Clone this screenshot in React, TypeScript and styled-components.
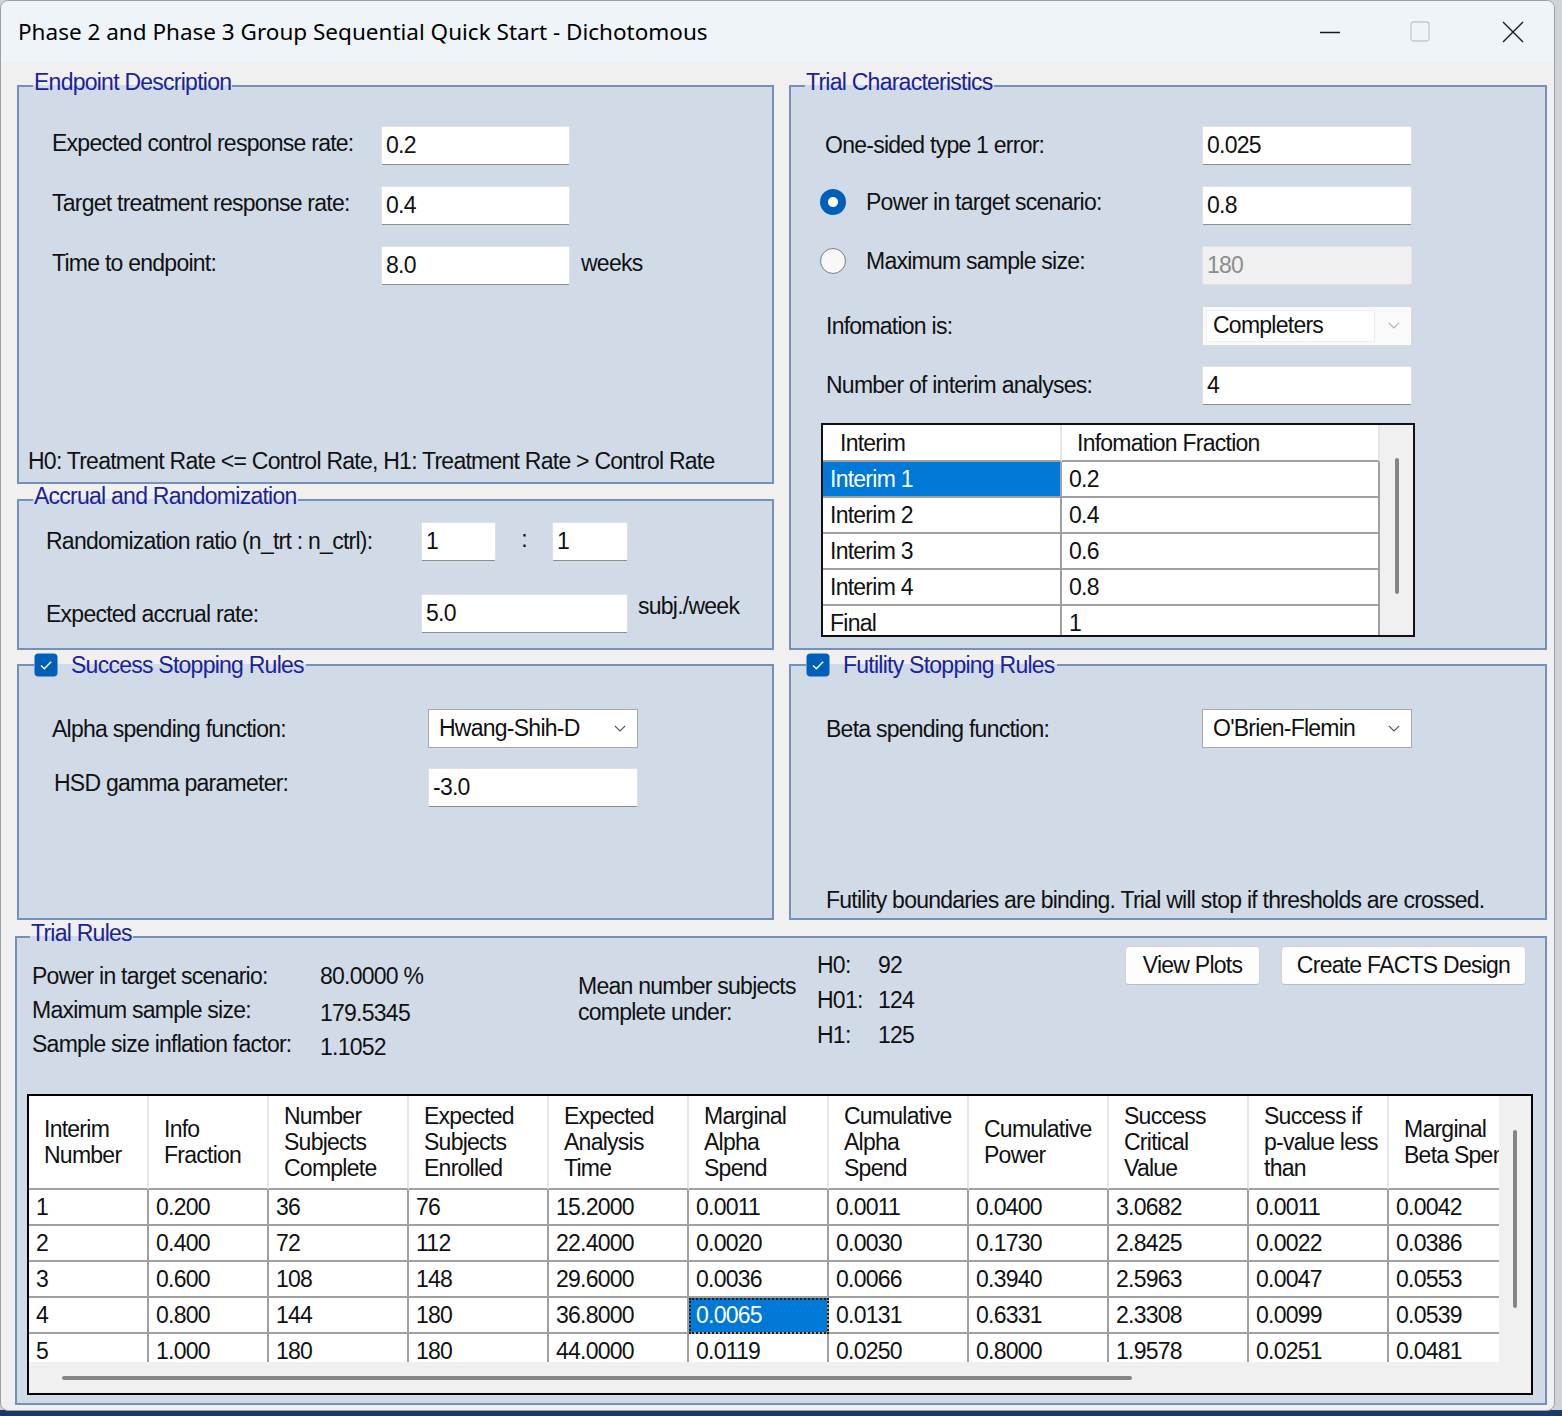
import React from 'react'
import styled, { createGlobalStyle } from 'styled-components'

const UI = `"Liberation Sans", Arial, sans-serif`

const GlobalStyle = createGlobalStyle`
  html, body { margin: 0; padding: 0; }
  body {
    min-height: 1416px;
    background: linear-gradient(#cfd3d8 0, #cfd3d8 1410px, #1d3a66 1410px);
    font-family: ${UI};
    font-size: 23px;
    letter-spacing: -0.75px;
    color: #111;
  }
`

type Row = string[]

const dataColumns = [
  'Interim\nNumber',
  'Info\nFraction',
  'Number\nSubjects\nComplete',
  'Expected\nSubjects\nEnrolled',
  'Expected\nAnalysis\nTime',
  'Marginal\nAlpha\nSpend',
  'Cumulative\nAlpha\nSpend',
  'Cumulative\nPower',
  'Success\nCritical\nValue',
  'Success if\np-value less\nthan',
  'Marginal\nBeta Spend',
]

const dataRows: Row[] = [
  ['1', '0.200', '36', '76', '15.2000', '0.0011', '0.0011', '0.0400', '3.0682', '0.0011', '0.0042'],
  ['2', '0.400', '72', '112', '22.4000', '0.0020', '0.0030', '0.1730', '2.8425', '0.0022', '0.0386'],
  ['3', '0.600', '108', '148', '29.6000', '0.0036', '0.0066', '0.3940', '2.5963', '0.0047', '0.0553'],
  ['4', '0.800', '144', '180', '36.8000', '0.0065', '0.0131', '0.6331', '2.3308', '0.0099', '0.0539'],
  ['5', '1.000', '180', '180', '44.0000', '0.0119', '0.0250', '0.8000', '1.9578', '0.0251', '0.0481'],
]

const interimRows: Row[] = [
  ['Interim 1', '0.2'],
  ['Interim 2', '0.4'],
  ['Interim 3', '0.6'],
  ['Interim 4', '0.8'],
  ['Final', '1'],
]

function Chevron({ color = '#555' }: { color?: string }) {
  return (
    <svg width="12" height="7" viewBox="0 0 12 7">
      <polyline points="0.8,0.8 6,6 11.2,0.8" fill="none" stroke={color} strokeWidth="1.2" />
    </svg>
  )
}

function CheckMark() {
  return (
    <svg width="24" height="24" viewBox="0 0 24 24">
      <rect x="0.5" y="0.5" width="23" height="23" rx="4" fill="#005fb8" />
      <path d="M7 12.4l3.3 3.3L17.2 8.8" fill="none" stroke="#fff" strokeWidth="1.4" />
    </svg>
  )
}

type GroupBoxProps = {
  title: React.ReactNode
  height: number
  check?: boolean
  offset?: number
  shift?: boolean
  children: React.ReactNode
}

// legend is 32px tall for plain titles, 30px when a checkbox sits in it
function GroupBox({ title, height, check, offset, shift, children }: GroupBoxProps) {
  const legendH = check ? 30 : 32
  const Box = shift ? RulesGroup : Group
  return (
    <Box $h={height}>
      <Legend $check={check} $offset={offset}>
        {check && <CheckMark />}
        {title}
      </Legend>
      <Inner $h={height - legendH - 2}>{children}</Inner>
    </Box>
  )
}

export default function App() {
  return (
    <>
      <GlobalStyle />
      <Window>
        <TitleBar>
          <Title>Phase 2 and Phase 3 Group Sequential Quick Start - Dichotomous</Title>
          <Caption>
            <CaptionButton $w={76}>
              <svg width="20" height="20" viewBox="0 0 20 20">
                <line x1="0" y1="10.5" x2="20" y2="10.5" stroke="#1a1a1a" strokeWidth="1.3" />
              </svg>
            </CaptionButton>
            <CaptionButton $w={104}>
              <svg width="20" height="21" viewBox="0 0 20 21">
                <rect x="1" y="1" width="18" height="19" rx="2.5" fill="none" stroke="#c6c6c6" strokeWidth="1.3" />
              </svg>
            </CaptionButton>
            <CaptionButton $w={82}>
              <svg width="22" height="22" viewBox="0 0 22 22">
                <path d="M1 1L21 21M21 1L1 21" stroke="#1a1a1a" strokeWidth="1.4" />
              </svg>
            </CaptionButton>
          </Caption>
        </TitleBar>

        <Body>
          <Columns>
            <Stack>
              <GroupBox title="Endpoint Description" height={414}>
                <Form $cols="329px 189px auto" $pt={24} $pl={33} $gap={21}>
                  <Label $lift={6}>Expected control response rate:</Label>
                  <TextBox>0.2</TextBox>
                  <span />
                  <Label $lift={6}>Target treatment response rate:</Label>
                  <TextBox>0.4</TextBox>
                  <span />
                  <Label $lift={6}>Time to endpoint:</Label>
                  <TextBox>8.0</TextBox>
                  <Unit>weeks</Unit>
                </Form>
                <Note $pl={9} $pb={9}>
                  H0: Treatment Rate &lt;= Control Rate, H1: Treatment Rate &gt; Control Rate
                </Note>
              </GroupBox>

              <GroupBox title="Accrual and Randomization" height={166}>
                <Form $cols="375px 75px 56px 76px auto" $pt={6} $pl={27} $gap={33}>
                  <Label $lift={2}>Randomization ratio (n_trt : n_ctrl):</Label>
                  <TextBox>1</TextBox>
                  <Colon>:</Colon>
                  <TextBox>1</TextBox>
                  <span />
                  <Label>Expected accrual rate:</Label>
                  <TextBox $span={3}>5.0</TextBox>
                  <Unit $top>subj./week</Unit>
                </Form>
              </GroupBox>
            </Stack>

            <GroupBox title="Trial Characteristics" height={580}>
              <Form $cols="382px 210px" $pt={24} $pl={29} $gap={21}>
                <Label $indent={5} $lift={2}>One-sided type 1 error:</Label>
                <TextBox>0.025</TextBox>
                <RadioLabel $lift={8}>
                  <Radio $checked />
                  Power in target scenario:
                </RadioLabel>
                <TextBox>0.8</TextBox>
                <RadioLabel $lift={10}>
                  <Radio />
                  Maximum sample size:
                </RadioLabel>
                <TextBox $disabled>180</TextBox>
                <Label $indent={6}>Infomation is:</Label>
                <FlatCombo>
                  <FlatField>Completers</FlatField>
                  <Chevron color="#b0b0b0" />
                </FlatCombo>
                <Label $indent={6} $lift={2}>Number of interim analyses:</Label>
                <TextBox>4</TextBox>
              </Form>

              <InfoGrid>
                <Viewport>
                  <Table $cols="239px 318px">
                    <HeadCell $h={37} $pad={17}>Interim</HeadCell>
                    <HeadCell $h={37} $pad={15}>Infomation Fraction</HeadCell>
                    {interimRows.map((r, i) =>
                      r.map((v, j) => (
                        <Cell key={`${i}-${j}`} $selected={i === 0 && j === 0}>
                          {v}
                        </Cell>
                      ))
                    )}
                  </Table>
                </Viewport>
                <VScroll $top={33}>
                  <VThumb $h={136} />
                </VScroll>
              </InfoGrid>
            </GroupBox>
          </Columns>

          <Columns>
            <GroupBox title="Success Stopping Rules" height={270} check>
              <Form $cols="376px 210px" $pt={29} $pl={33} $gap={20}>
                <Label>Alpha spending function:</Label>
                <Combo>
                  Hwang-Shih-D
                  <Chevron />
                </Combo>
                <Label $indent={2} $lift={10}>HSD gamma parameter:</Label>
                <TextBox>-3.0</TextBox>
              </Form>
            </GroupBox>

            <GroupBox title="Futility Stopping Rules" height={270} check>
              <Form $cols="376px 210px" $pt={29} $pl={35} $gap={20}>
                <Label>Beta spending function:</Label>
                <Combo>
                  O'Brien-Flemin
                  <Chevron />
                </Combo>
              </Form>
              <Note $pl={35} $pb={6}>
                Futility boundaries are binding. Trial will stop if thresholds are crossed.
              </Note>
            </GroupBox>
          </Columns>

          <GroupBox title="Trial Rules" height={484} offset={13} shift>
            <Summary>
              <StatsGrid>
                <Label>Power in target scenario:</Label>
                <Value>80.0000 %</Value>
                <Label>Maximum sample size:</Label>
                <Value $drop>179.5345</Value>
                <Label>Sample size inflation factor:</Label>
                <Value $drop>1.1052</Value>
              </StatsGrid>
              <MeanText>
                Mean number subjects
                <br />
                complete under:
              </MeanText>
              <HypGrid>
                <Label>H0:</Label>
                <Value>92</Value>
                <Label>H01:</Label>
                <Value>124</Value>
                <Label>H1:</Label>
                <Value>125</Value>
              </HypGrid>
              <Buttons>
                <Button $w={135}>View Plots</Button>
                <Button $w={245}>Create FACTS Design</Button>
              </Buttons>
            </Summary>

            <GridFrame>
              <Viewport>
                <Table $cols="120px 120px repeat(9, 140px)">
                  {dataColumns.map(c => (
                    <HeadCell key={c} $h={94} $pad={15}>
                      {c}
                    </HeadCell>
                  ))}
                  {dataRows.map((r, i) =>
                    r.map((v, j) => (
                      <Cell key={`${i}-${j}`} $selected={i === 3 && j === 5} $focus={i === 3 && j === 5}>
                        {v}
                      </Cell>
                    ))
                  )}
                </Table>
              </Viewport>
              <VScroll $top={34}>
                <VThumb $h={178} />
              </VScroll>
              <HScroll>
                <HThumb $w={1070} />
              </HScroll>
              <Corner />
            </GridFrame>
          </GroupBox>
        </Body>
      </Window>
    </>
  )
}

const Window = styled.div`
  width: 1555px;
  height: 1411px;
  box-sizing: border-box;
  border: 1px solid #9aa0a6;
  border-radius: 8px;
  background: #f0f0f0;
  overflow: hidden;
  display: flex;
  flex-direction: column;
`

const TitleBar = styled.div`
  flex: none;
  height: 61px;
  display: flex;
  align-items: center;
  padding-left: 17px;
  background: #eff4f9;
`

const Title = styled.div`
  flex: 1;
  font-family: "Noto Sans", "Open Sans", sans-serif;
  font-size: 22.5px;
  letter-spacing: 0;
  color: #000;
`

const Caption = styled.div`
  display: flex;
  height: 100%;
`

const CaptionButton = styled.div<{ $w: number }>`
  width: ${p => p.$w}px;
  display: flex;
  align-items: center;
  justify-content: center;
`

const Body = styled.div`
  flex: 1;
  display: flex;
  flex-direction: column;
  padding: 8px 7px 0 16px;
`

const Columns = styled.div`
  display: grid;
  grid-template-columns: 757px 758px;
  column-gap: 15px;
`

const Stack = styled.div`
  display: flex;
  flex-direction: column;
`

const Group = styled.fieldset<{ $h: number }>`
  margin: 0;
  padding: 0;
  min-width: 0;
  box-sizing: border-box;
  height: ${p => p.$h}px;
  border: 2px solid #7591b7;
  background: #d1dbe8;
`

const RulesGroup = styled(Group)`
  margin: 1px 0 0 -2px;
`

const Legend = styled.legend<{ $check?: boolean; $offset?: number }>`
  margin-left: ${p => p.$offset ?? (p.$check ? 15 : 14)}px;
  padding: ${p => (p.$check ? '3px 2px 3px 0' : '0 1px 8px')};
  display: flex;
  align-items: center;
  gap: 13px;
  font-size: 23px;
  line-height: 24px;
  color: #1a239a;
`

const Inner = styled.div<{ $h: number }>`
  height: ${p => p.$h}px;
  display: flex;
  flex-direction: column;
`

// $lift raises a label above the centre line of its field, as the dialog does
const Label = styled.div<{ $indent?: number; $lift?: number }>`
  padding-left: ${p => p.$indent ?? 0}px;
  padding-bottom: ${p => p.$lift ?? 0}px;
  line-height: 24px;
  white-space: nowrap;
  color: #111;
`

const RadioLabel = styled(Label)`
  display: flex;
  align-items: center;
  gap: 20px;
`

const Form = styled.div<{ $cols: string; $pt: number; $pl: number; $gap: number }>`
  display: grid;
  grid-template-columns: ${p => p.$cols};
  grid-auto-rows: 39px;
  row-gap: ${p => p.$gap}px;
  align-items: center;
  padding: ${p => p.$pt}px 0 0 ${p => p.$pl}px;
`

const Radio = styled.span<{ $checked?: boolean }>`
  flex: none;
  width: 26px;
  height: 26px;
  box-sizing: border-box;
  border-radius: 50%;
  background: ${p =>
    p.$checked ? 'radial-gradient(circle, #fff 0 4.5px, #005fb8 5.5px)' : '#f8f8f8'};
  border: ${p => (p.$checked ? 'none' : '1.5px solid #7d7d7d')};
`

const TextBox = styled.div<{ $span?: number; $disabled?: boolean }>`
  grid-column: span ${p => p.$span ?? 1};
  height: 39px;
  box-sizing: border-box;
  display: flex;
  align-items: center;
  padding-left: 4px;
  background: ${p => (p.$disabled ? '#f0f0f0' : '#fff')};
  color: ${p => (p.$disabled ? '#8d8d8d' : '#111')};
  border: 1px solid ${p => (p.$disabled ? '#e2e2e2' : '#e0e0e0')};
  border-bottom-color: ${p => (p.$disabled ? '#e2e2e2' : '#8c8c8c')};
  border-radius: 2px;
`

const Combo = styled.div`
  height: 39px;
  box-sizing: border-box;
  display: flex;
  align-items: center;
  justify-content: space-between;
  padding: 0 11px 0 10px;
  background: #fff;
  border: 1px solid #a9a9a9;
`

const FlatCombo = styled.div`
  height: 40px;
  box-sizing: border-box;
  display: flex;
  align-items: center;
  gap: 13px;
  padding: 3px 11px 3px 3px;
  background: #fafafa;
  border: 1px solid #d9d9d9;
`

const FlatField = styled.div`
  width: 170px;
  height: 100%;
  box-sizing: border-box;
  display: flex;
  align-items: center;
  padding-left: 6px;
  background: #fff;
  border: 1px solid #eeeeee;
`

const Unit = styled.div<{ $top?: boolean }>`
  align-self: ${p => (p.$top ? 'start' : 'center')};
  padding: 0 0 ${p => (p.$top ? 0 : 6)}px ${p => (p.$top ? 10 : 11)}px;
  line-height: 24px;
  white-space: nowrap;
`

const Colon = styled.div`
  text-align: center;
  padding-bottom: 4px;
`

const Note = styled.div<{ $pl: number; $pb: number }>`
  margin-top: auto;
  padding: 0 0 ${p => p.$pb}px ${p => p.$pl}px;
  line-height: 24px;
  white-space: nowrap;
`

const InfoGrid = styled.div`
  margin: 18px 0 0 30px;
  width: 594px;
  height: 214px;
  box-sizing: border-box;
  border: 2px solid #111;
  background: #f0f0f0;
  display: grid;
  grid-template-columns: 1fr 33px;
`

const Viewport = styled.div`
  overflow: hidden;
  background: #fff;
`

const Table = styled.div<{ $cols: string }>`
  display: grid;
  grid-template-columns: ${p => p.$cols};
  width: max-content;
`

const HeadCell = styled.div<{ $h: number; $pad: number }>`
  height: ${p => p.$h}px;
  box-sizing: border-box;
  display: flex;
  align-items: center;
  padding-left: ${p => p.$pad}px;
  background: #fff;
  border-right: 2px solid #e6e6e6;
  border-bottom: 2px solid #a0a0a0;
  line-height: 26px;
  white-space: pre;
  overflow: hidden;
`

const Cell = styled.div<{ $selected?: boolean; $focus?: boolean }>`
  height: 36px;
  box-sizing: border-box;
  display: flex;
  align-items: center;
  padding-left: 7px;
  border-right: 2px solid #a0a0a0;
  border-bottom: 2px solid #a0a0a0;
  background: ${p => (p.$selected ? '#0078d7' : '#fff')};
  color: ${p => (p.$selected ? '#fff' : '#111')};
  outline: ${p => (p.$focus ? '2px dotted #2b1d00' : 'none')};
  outline-offset: -2px;
  white-space: nowrap;
  overflow: hidden;
`

const VScroll = styled.div<{ $top: number }>`
  display: flex;
  justify-content: center;
  padding-top: ${p => p.$top}px;
  background: #f0f0f0;
`

const VThumb = styled.div<{ $h: number }>`
  width: 4px;
  height: ${p => p.$h}px;
  border-radius: 2px;
  background: #858585;
`

const HScroll = styled.div`
  display: flex;
  align-items: center;
  padding-left: 33px;
  background: #f0f0f0;
`

const HThumb = styled.div<{ $w: number }>`
  width: ${p => p.$w}px;
  height: 4px;
  border-radius: 2px;
  background: #858585;
`

const Corner = styled.div`
  background: #f0f0f0;
`

const Summary = styled.div`
  height: 148px;
  flex: none;
  margin-top: -7px;
  display: flex;
  align-items: flex-start;
  padding: 0 19px 0 15px;
`

const StatsGrid = styled.div`
  display: grid;
  grid-template-columns: 288px 258px;
  grid-auto-rows: 34px;
  align-items: center;
  margin-top: 13px;
`

const Value = styled.div<{ $drop?: boolean }>`
  padding-top: ${p => (p.$drop ? 6 : 0)}px;
  line-height: 24px;
  white-space: nowrap;
`

const MeanText = styled.div`
  width: 239px;
  margin-top: 27px;
  line-height: 26px;
  white-space: nowrap;
`

const HypGrid = styled.div`
  display: grid;
  grid-template-columns: 61px 60px;
  grid-auto-rows: 35px;
  align-items: center;
  margin-top: 1px;
`

const Buttons = styled.div`
  margin-left: auto;
  display: flex;
  gap: 21px;
`

const Button = styled.div<{ $w: number }>`
  width: ${p => p.$w}px;
  height: 39px;
  box-sizing: border-box;
  display: flex;
  align-items: center;
  justify-content: center;
  background: #fdfdfd;
  border: 1px solid #d2d2d2;
  border-bottom-color: #bdbdbd;
  border-radius: 4px;
  white-space: nowrap;
  color: #111;
`

const GridFrame = styled.div`
  height: 301px;
  flex: none;
  margin: 0 12px 0 10px;
  box-sizing: border-box;
  border: 2px solid #000;
  background: #f0f0f0;
  display: grid;
  grid-template-columns: 1fr 32px;
  grid-template-rows: 1fr 31px;
`
